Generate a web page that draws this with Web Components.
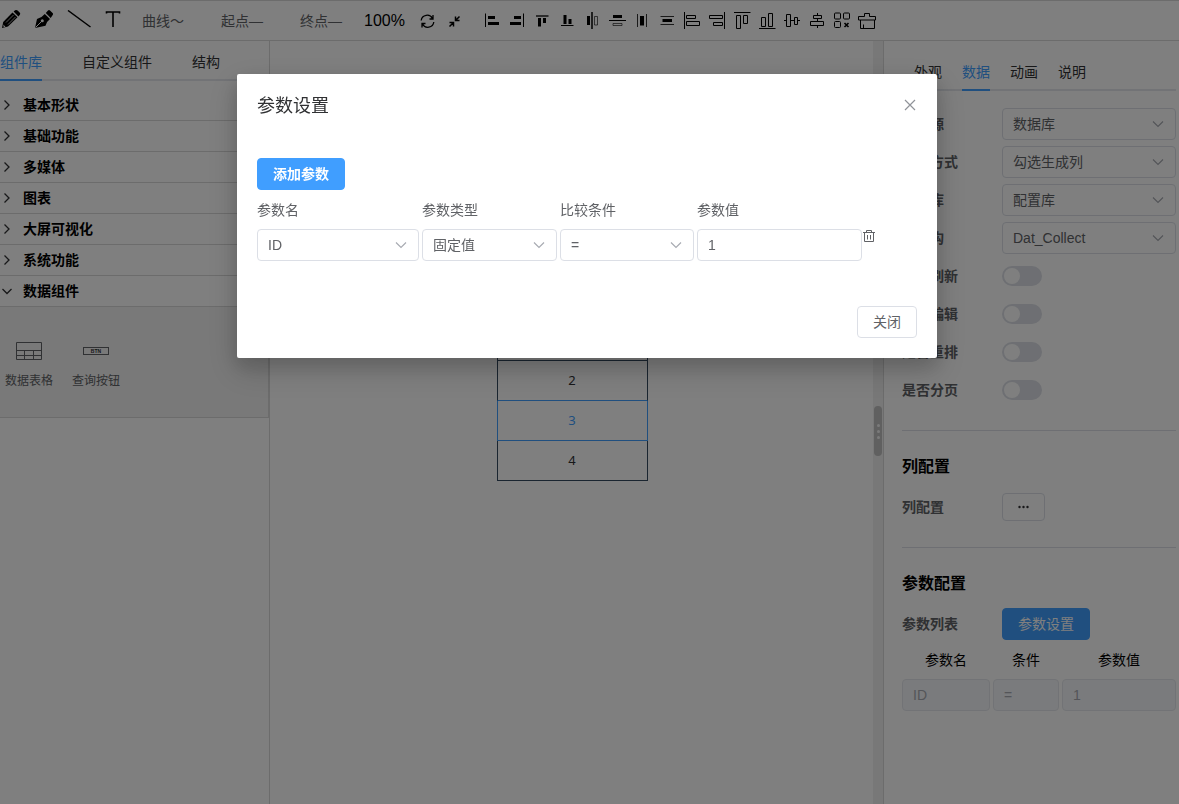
<!DOCTYPE html>
<html lang="zh-CN">
<head>
<meta charset="utf-8">
<title>参数设置</title>
<style>
:root {
  --blue: #409eff;
  --line: #d8d8d8;
  --border: #dcdfe6;
  --text: #606266;
}
body {
  margin: 0;
  background: #ffffff;
  color: #303133;
  font-family: "Liberation Sans", "Noto Sans CJK SC", sans-serif;
  font-size: 14px;
  line-height: 20px;
}
</style>
</head>
<body>
<app-shell></app-shell>

<script>
const base = `
*, *::before, *::after {
  box-sizing: border-box;
}
:host {
  display: block;
  box-sizing: border-box;
}
button, input, select {
  font: inherit;
  color: inherit;
  margin: 0;
}
svg {
  display: block;
}
`;

function define(name, style, render) {
  customElements.define(name, class extends HTMLElement {
    constructor() {
      super();
      this.attachShadow({ mode: "open" });
    }
    connectedCallback() {
      this.shadowRoot.innerHTML = `<style>${base}${style}</style>${render(this)}`;
    }
  });
}

// f = filled shapes, s = stroked shapes, on a 20 x 20 grid
const f = (d) => `<path fill="#000" d="${d}"/>`;
const s = (d, w = 1) => `<path fill="none" stroke="#000" stroke-width="${w}" d="${d}"/>`;
const icons = {
  "左对齐": s("M3.5 3.5v13.5") + f("M6 6h7v3H6zM6 12h11v3H6z"),
  "右对齐": s("M16.5 3.5v13.5") + f("M7 6h7v3H7zM3 12h11v3H3z"),
  "顶对齐": s("M4 6h12.5", 1.3) + f("M6 8h3v8.500H6zM11 8h3v5h-3z"),
  "底对齐": s("M4 15.500h12.500") + f("M6.500 5h3v9h-3zM11.500 9h3v5h-3z"),
  "水平镜像": s("M10 2v17", 1.5) + f("M5 6h3v9H5z") + s("M12.500 6.500h3v8.500h-3z", 0.6),
  "垂直镜像": s("M2 10.500h17") + f("M6 5h9v3H6z") + s("M6 13.500h9v2H6z", 0.6),
  "水平分布": s("M5.500 4v13M14.500 4v13", 0.8) + f("M8 6h4v9.500H8z"),
  "垂直分布": s("M3.500 6.500H17M3.500 14.500H17", 0.8) + f("M5.500 9h9.500v3H5.500z"),
  "等左边距": s("M2.500 2v17M4.500 5.500h9v3h-9zM4.500 11.500h13v4h-13z"),
  "等右边距": s("M17.500 2v17M2.500 5.500h13v3h-13zM6.500 12.500h9v3h-9z"),
  "等顶边距": s("M2 2.500h16.500M4.500 5.500h4v13h-4zM11.500 5.500h4v8h-4z"),
  "等底边距": s("M2 18.500h16.500M4.500 7.500h4v9h-4zM11.500 3.500h4v13h-4z"),
  "垂直居中": s("M4.500 4.500h4v12h-4zM12.500 7.500h3v7h-3zM2 10.500h2.500M8.500 10.500h4M15.500 10.500H18"),
  "水平居中": s("M6.500 5.500h8v3h-8zM3.500 11.500h13v4h-13zM10.500 3v2.500M10.500 8.500v3M10.500 15.500V18"),
  "取消组合": `<g fill="none" stroke="#000"><rect x="2.500" y="3" width="6" height="6" rx="1"/><rect x="11.500" y="3" width="6" height="6" rx="1"/><rect x="2.500" y="11.500" width="6" height="6" rx="1"/></g>` + s("M12.500 13l4 4M16.500 13l-4 4", 1.6),
  "清空": s("M1.500 10V6.500h6V3.500h5v3h6V10zM3.500 10v8.500h14V10M6.500 14.500v4"),
};

define("icon-button", `
:host {
  flex: none;
}
button {
  display: block;
  border: 0;
  padding: 0;
  background: none;
  cursor: pointer;
}
`, (el) => `<button type="button" aria-label="${el.getAttribute("label")}"><slot></slot></button>`);

define("tool-bar", `
:host {
  border-top: 1px solid var(--line);
  border-bottom: 1px solid var(--line);
  padding: 0 0 1px 1px;
  overflow: hidden;
}
.bar, .draw, .line, .align, .view {
  display: flex;
  align-items: center;
}
.bar {
  height: 38px;
}
.draw {
  gap: 13px;
}
.line {
  gap: 37px;
  margin: 0 22px 0 20px;
}
.line button {
  border: 0;
  padding: 2px 0 0;
  background: none;
  color: var(--text);
  white-space: nowrap;
  line-height: 20px;
}
.zoom {
  padding-top: 2px;
  font-size: 16px;
  color: #000000;
}
.view {
  gap: 11px;
  margin: 0 20px 0 14px;
}
.align {
  gap: 5px;
}
`, () => `
<div class="bar">
  <div class="draw">
    <icon-button label="铅笔"><svg width="20" height="20" viewBox="0 0 20 20">
      <path d="M1 18l1.200-6L11.500 2.500l5 4.800L7 16.600z"/>
      <path d="M12.600 1.600l1.500-1.300q1.200-.6 2.500.1l2 2q1.200 1.300.1 2.600l-1.300 1.400z"/>
      <path d="M5 12.500l7.500-7.500M7 14.500l7.500-7.500" stroke="#fff" stroke-width=".7"/>
      <path d="M2.200 14.500l2.300 2.300-1.800.4z" fill="#fff"/>
    </svg></icon-button>
    <icon-button label="钢笔"><svg width="20" height="20" viewBox="0 0 20 20">
      <path d="M1 18L3 9Q7.500 8 10.800 4l5.200 5Q12.500 11.500 11.500 15.700z"/>
      <path d="M11.800 3.100L14 .5q1-.8 2 0l2.600 2.500q.9 1 .1 2l-2 3z"/>
      <path d="M1.500 17.500L7.500 11.500" stroke="#fff"/>
      <circle cx="8.300" cy="10.800" r="1.500" fill="#fff"/>
    </svg></icon-button>
    <icon-button label="直线"><svg width="24" height="20" viewBox="0 0 24 20"><path d="M1 .5L23.500 17" stroke="#000" stroke-width="1.500"/></svg></icon-button>
    <icon-button label="文字"><svg width="18" height="20" viewBox="0 0 18 20"><path d="M2.500 3.500V2h13v1.500M9 2v15" fill="none" stroke="#000" stroke-width="1.600"/></svg></icon-button>
  </div>
  <div class="line">
    <button type="button">曲线～</button>
    <button type="button">起点—</button>
    <button type="button">终点—</button>
  </div>
  <span class="zoom">100%</span>
  <div class="view">
    <icon-button label="重置"><svg width="16" height="16" viewBox="0 0 16 16" fill="none" stroke="#000" stroke-width="1.300">
      <path d="M2.200 8.500A6 6 0 0 1 13.500 6.500M14.800 10A6 6 0 0 1 3.500 12M14 3v4h-3.500M3 15.500v-4h3.500"/>
    </svg></icon-button>
    <icon-button label="适应"><svg width="16" height="16" viewBox="0 0 16 16" fill="none" stroke="#000" stroke-width="1.500">
      <path d="M13.500 4.500L10 8M9.500 4.500v4h4M3.500 14.500L7 11M3.500 10.500h4v4"/>
    </svg></icon-button>
  </div>
  <div class="align">
    ${Object.keys(icons).map((k) => `<icon-button label="${k}"><svg width="20" height="20" viewBox="0 0 20 20">${icons[k]}</svg></icon-button>`).join("")}
  </div>
</div>`);

define("tab-bar", `
:host {
  height: 40px;
  border-bottom: 2px solid #e4e7ed;
}
div {
  display: flex;
  gap: var(--tab-gap, 40px);
  padding-left: var(--tab-inset, 0);
}
button {
  flex: none;
  height: 40px;
  border: 0;
  border-bottom: 2px solid transparent;
  padding: 4px 0 0;
  background: none;
}
button[aria-selected="true"] {
  color: var(--blue);
  border-color: var(--blue);
}
`, (el) => `
<div role="tablist">
  ${el.getAttribute("items").split(",").map((t) => `<button type="button" role="tab" aria-selected="${t === el.getAttribute("active")}">${t}</button>`).join("")}
</div>`);

define("collapse-item", `
button {
  display: flex;
  align-items: center;
  gap: 9px;
  width: 100%;
  height: 31px;
  border: 0;
  border-bottom: 1px solid var(--line);
  padding: 0;
  background: none;
  color: #000000;
  font-weight: 700;
}
.content {
  display: flex;
  gap: 19px;
  padding: 30px 5px 28px;
  background: #f2f2f2;
  border-right: 1px solid var(--line);
  border-bottom: 1px solid var(--line);
}
`, (el) => {
  const open = el.hasAttribute("open");
  return `
<button type="button" aria-expanded="${open}">
  <svg width="14" height="14" viewBox="0 0 14 14" fill="none" stroke="#303133" stroke-width="1.300"><path d="${open ? "M2.500 5L7 9.500 11.500 5" : "M4.500 2.500L9 7 4.500 11.500"}"/></svg>
  ${el.getAttribute("label")}
</button>
${open ? `<div class="content"><slot></slot></div>` : ""}`;
});

define("component-tile", `
:host {
  display: flex;
  flex-direction: column;
  align-items: center;
  gap: 8px;
  width: 48px;
  color: var(--text);
  font-size: 12px;
  line-height: 16px;
  white-space: nowrap;
}
`, (el) => `<slot></slot><span>${el.getAttribute("label")}</span>`);

define("side-panel", `
:host {
  border-right: 1px solid var(--line);
}
.list {
  padding-top: 9px;
}
`, () => `
<tab-bar items="组件库,自定义组件,结构" active="组件库"></tab-bar>
<div class="list">
  <collapse-item label="基本形状"></collapse-item>
  <collapse-item label="基础功能"></collapse-item>
  <collapse-item label="多媒体"></collapse-item>
  <collapse-item label="图表"></collapse-item>
  <collapse-item label="大屏可视化"></collapse-item>
  <collapse-item label="系统功能"></collapse-item>
  <collapse-item label="数据组件" open>
    <component-tile label="数据表格">
      <svg width="28" height="28" viewBox="0 0 28 28" fill="none" stroke="#606266"><path d="M1.500 5.500h25v17h-25zM1.500 13.500h25M1.500 18.500h25M9.500 13.500v9M18.500 13.500v9"/></svg>
    </component-tile>
    <component-tile label="查询按钮">
      <svg width="28" height="28" viewBox="0 0 28 28"><rect x="1.500" y="10.500" width="25" height="7" fill="none" stroke="#606266"/><text x="14" y="16" font-size="5" font-weight="700" text-anchor="middle" fill="#303133">BTN</text></svg>
    </component-tile>
  </collapse-item>
</div>`);

define("draw-canvas", `
:host {
  position: relative;
  overflow: hidden;
}
table {
  position: absolute;
  top: 239px;
  left: calc(50% - 75px);
  width: 151px;
  border-top: 1px solid #344a60;
  border-spacing: 0;
  font-family: "Noto Sans", sans-serif;
  font-size: 13px;
  text-align: center;
}
td {
  height: 40px;
  padding: 0 0 2px;
  border: 1px solid #344a60;
  border-top: 0;
}
.before td {
  border-bottom-color: var(--blue);
}
.current td {
  color: var(--blue);
  border-color: var(--blue);
}
`, () => `
<table>
  <tr><td>ID</td></tr>
  <tr><td>1</td></tr>
  <tr class="before"><td>2</td></tr>
  <tr class="current"><td>3</td></tr>
  <tr><td>4</td></tr>
</table>`);

define("split-handle", `
:host {
  display: flex;
  align-items: center;
  justify-content: center;
  padding-top: 17px;
  background: #f0f0f0;
}
div {
  display: flex;
  flex-direction: column;
  align-items: center;
  justify-content: center;
  gap: 3px;
  width: 8px;
  height: 50px;
  border-radius: 4px;
  background: #c0c0c0;
}
i {
  width: 3px;
  height: 3px;
  border-radius: 50%;
  background: #f5f5f5;
}
`, () => `<div><i></i><i></i><i></i></div>`);

// label + control; "top" puts the label over the control
define("form-field", `
:host {
  display: flex;
  align-items: center;
  min-width: 0;
}
label {
  flex: none;
  width: 100px;
  color: var(--text);
  font-weight: 700;
}
:host([top]) {
  flex-direction: column;
  align-items: stretch;
  gap: 9px;
}
:host([top]) label {
  width: auto;
  font-weight: 400;
}
:host([center]) label {
  color: #000000;
  text-align: center;
}
.control {
  flex: 1;
  display: grid;
  align-items: center;
  min-width: 0;
  min-height: 32px;
}
select, .text {
  grid-area: 1 / 1;
  width: 100%;
  height: 32px;
  border: 1px solid var(--border);
  border-radius: 4px;
  padding: 0 10px;
  background: #ffffff;
  color: var(--text);
  appearance: none;
}
.text:disabled {
  background: #f5f7fa;
  border-color: #e4e7ed;
  color: #a8abb2;
}
svg {
  grid-area: 1 / 1;
  justify-self: end;
  margin-right: 11px;
  pointer-events: none;
}
.switch {
  display: flex;
  width: 40px;
  height: 20px;
  border-radius: 10px;
  padding: 2px;
  background: var(--border);
  appearance: none;
}
.switch::before {
  content: "";
  width: 16px;
  height: 16px;
  border-radius: 50%;
  background: #ffffff;
}
`, (el) => {
  const kind = el.getAttribute("kind");
  const value = el.getAttribute("value");
  const controls = {
    select: `<select id="control"><option>${value}</option></select>
      <svg width="14" height="14" viewBox="0 0 14 14" fill="none" stroke="#a8abb2" stroke-width="1.200"><path d="M2 4.500l5 5 5-5"/></svg>`,
    input: `<input id="control" class="text" type="text" value="${value}" ${el.hasAttribute("disabled") ? "disabled" : ""}>`,
    switch: `<input id="control" class="switch" type="checkbox" role="switch">`,
  };
  return `<label for="control">${el.getAttribute("label")}</label><div class="control">${controls[kind]}</div>`;
});

define("ui-button", `
:host {
  flex: none;
}
button {
  display: block;
  height: 32px;
  border: 1px solid var(--border);
  border-radius: 4px;
  padding: 0 15px;
  background: #ffffff;
  color: var(--text);
}
:host([primary]) button {
  border-color: var(--blue);
  background: var(--blue);
  color: #ffffff;
}
:host([bold]) button {
  font-weight: 700;
}
:host([small]) button {
  height: 28px;
}
`, () => `<button type="button"><slot></slot></button>`);

define("property-panel", `
:host {
  border-left: 1px solid var(--line);
  padding: 10px 3px 0 18px;
}
tab-bar {
  --tab-gap: 20px;
  --tab-inset: 12px;
}
.form {
  display: grid;
  gap: 6px;
  padding-top: 17px;
}
section {
  margin-top: 24px;
  border-top: 1px solid var(--border);
  padding-top: 24px;
}
h3 {
  margin: 0 0 12px;
  color: #000000;
  font-size: 16px;
  line-height: 24px;
}
.row {
  display: flex;
  align-items: center;
  height: 32px;
}
.row span {
  flex: none;
  width: 100px;
  color: var(--text);
  font-weight: 700;
}
.params {
  display: grid;
  grid-template-columns: 88fr 66fr 114fr;
  gap: 3px;
  margin-top: 10px;
}
`, () => `
<tab-bar items="外观,数据,动画,说明" active="数据"></tab-bar>
<div class="form">
  <form-field label="数据源" kind="select" value="数据库"></form-field>
  <form-field label="生成方式" kind="select" value="勾选生成列"></form-field>
  <form-field label="数据库" kind="select" value="配置库"></form-field>
  <form-field label="表结构" kind="select" value="Dat_Collect"></form-field>
  <form-field label="自动刷新" kind="switch"></form-field>
  <form-field label="是否编辑" kind="switch"></form-field>
  <form-field label="是否重排" kind="switch"></form-field>
  <form-field label="是否分页" kind="switch"></form-field>
</div>
<section>
  <h3>列配置</h3>
  <div class="row"><span>列配置</span><ui-button small><svg width="11" height="12" viewBox="0 0 11 12" fill="#303133"><circle cx="1.500" cy="6" r="1.200"/><circle cx="5.500" cy="6" r="1.200"/><circle cx="9.500" cy="6" r="1.200"/></svg></ui-button></div>
</section>
<section>
  <h3>参数配置</h3>
  <div class="row"><span>参数列表</span><ui-button primary>参数设置</ui-button></div>
  <div class="params">
    <form-field top center label="参数名" kind="input" value="ID" disabled></form-field>
    <form-field top center label="条件" kind="input" value="=" disabled></form-field>
    <form-field top center label="参数值" kind="input" value="1" disabled></form-field>
  </div>
</section>`);

define("modal-dialog", `
:host {
  position: fixed;
  inset: 0;
  display: flex;
  align-items: flex-start;
  justify-content: center;
  padding: 74px 5px 0 0;
  background: rgba(0, 0, 0, 0.5);
}
.box {
  width: 700px;
  border-radius: 2px;
  padding: 20px;
  background: #ffffff;
  box-shadow: 0 12px 32px 4px rgba(0, 0, 0, 0.12), 0 8px 20px rgba(0, 0, 0, 0.16);
}
header {
  display: flex;
  align-items: center;
  justify-content: space-between;
  margin-bottom: 40px;
}
h2 {
  margin: 0;
  font-size: 18px;
  font-weight: 400;
  line-height: 24px;
}
footer {
  display: flex;
  justify-content: flex-end;
  margin-top: 45px;
}
`, (el) => `
<div class="box" role="dialog" aria-modal="true" aria-labelledby="title">
  <header>
    <h2 id="title">${el.getAttribute("label")}</h2>
    <icon-button label="关闭"><svg width="14" height="14" viewBox="0 0 14 14" stroke="#909399" stroke-width="1.200"><path d="M2 1l10 10M12 1L2 11"/></svg></icon-button>
  </header>
  <slot></slot>
  <footer><ui-button>关闭</ui-button></footer>
</div>`);

define("param-editor", `
.row {
  display: flex;
  align-items: flex-end;
  margin-top: 10px;
}
.fields {
  flex: 1;
  display: grid;
  grid-template-columns: 162fr 135fr 134fr 165fr;
  gap: 3px;
}
.action {
  width: 55px;
  height: 32px;
}
`, () => `
<ui-button primary bold>添加参数</ui-button>
<div class="row">
  <div class="fields">
    <form-field top label="参数名" kind="select" value="ID"></form-field>
    <form-field top label="参数类型" kind="select" value="固定值"></form-field>
    <form-field top label="比较条件" kind="select" value="="></form-field>
    <form-field top label="参数值" kind="input" value="1"></form-field>
  </div>
  <div class="action">
    <icon-button label="删除"><svg width="14" height="14" viewBox="0 0 14 14" fill="none" stroke="#606266"><path d="M1 3.500h12M4.500 3.500v-2h5v2M2.500 3.500v9h9v-9M5.500 6v4.500M8.500 6v4.500"/></svg></icon-button>
  </div>
</div>`);

define("app-shell", `
:host {
  display: grid;
  grid-template-rows: auto 1fr;
  height: 100vh;
  overflow: hidden;
}
main {
  display: grid;
  grid-template-columns: 270px 1fr 10px 296px;
  min-height: 0;
}
`, () => `
<tool-bar></tool-bar>
<main>
  <side-panel></side-panel>
  <draw-canvas></draw-canvas>
  <split-handle></split-handle>
  <property-panel></property-panel>
</main>
<modal-dialog label="参数设置">
  <param-editor></param-editor>
</modal-dialog>`);
</script>
</body>
</html>
